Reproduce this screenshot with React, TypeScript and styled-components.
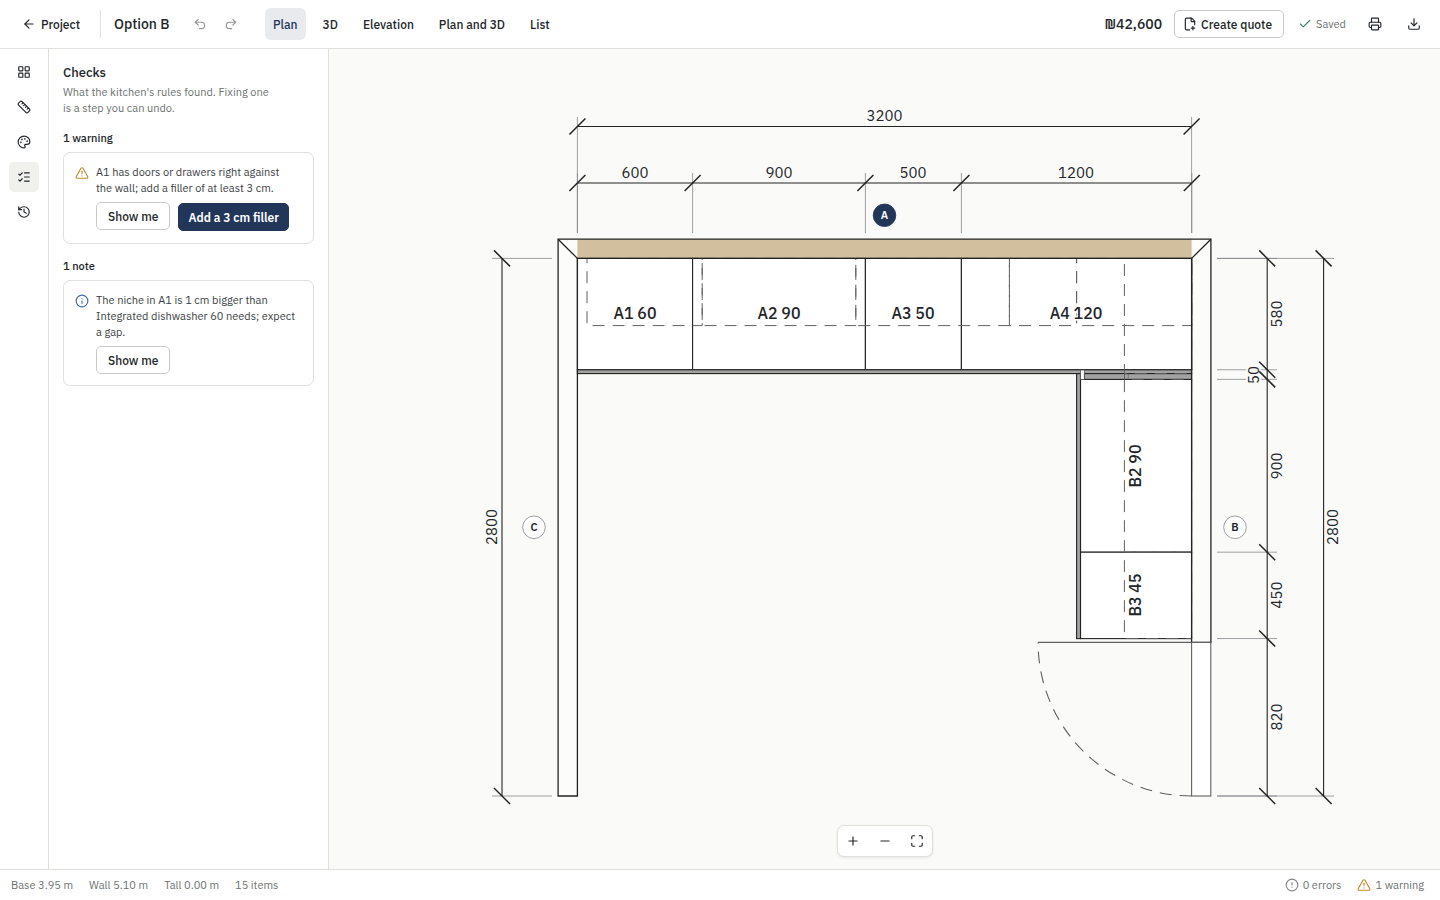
import React from "react";
import styled, { createGlobalStyle, css } from "styled-components";
import {
  ArrowLeft,
  Check,
  CircleAlert,
  Download,
  History,
  Info,
  LayoutGrid,
  ListChecks,
  Maximize,
  Minus,
  Palette,
  Plus,
  Printer,
  Redo2,
  Ruler,
  TriangleAlert,
  Undo2,
} from "lucide-react";

const c = {
  ink: "#22262a",
  muted: "#6c726f",
  line: "#dfdfdc",
  control: "#c9c9c6",
  navy: "#22365a",
  canvas: "#fafaf8",
  active: "#f0f0ed",
  tab: "#e9eaee",
  amber: "#c08a34",
  blue: "#3f6fae",
  green: "#3c8465",
  faint: "#85888b",
  stroke: "#232323",
};

const font = '"IBM Plex Sans", "Noto Sans", "Liberation Sans", sans-serif';

const GlobalStyle = createGlobalStyle`
  * { box-sizing: border-box; }
  body { margin: 0; background: #fff; color: ${c.ink}; font-family: ${font}; font-size: 12px; }
  button { font: inherit; color: inherit; cursor: pointer; }
  h1, h2, h3, p { margin: 0; }
  svg { flex: none; }
`;

const Shell = styled.div`
  display: flex;
  flex-direction: column;
  min-height: 100vh;
`;

const Header = styled.header`
  display: flex;
  align-items: center;
  justify-content: space-between;
  height: 49px;
  padding: 0 11px 0 16px;
  border-bottom: 1px solid ${c.line};
`;

const Group = styled.div<{ $gap: number }>`
  display: flex;
  align-items: center;
  gap: ${(p) => p.$gap}px;
`;

const BackLink = styled.a`
  display: flex;
  align-items: center;
  gap: 5px;
  height: 28px;
  padding: 0 20px 0 6px;
  border-right: 1px solid ${c.line};
  color: ${c.ink};
  font-size: 12px;
  font-weight: 500;
  text-decoration: none;
`;

const PlanName = styled.h1`
  width: 84px;
  padding-left: 13px;
  font-size: 14px;
  font-weight: 500;
  line-height: 20px;
  white-space: nowrap;
`;

const IconButton = styled.button<{ $active?: boolean; $dim?: boolean }>`
  display: grid;
  place-items: center;
  width: 30px;
  height: 30px;
  padding: 0;
  border: 0;
  border-radius: 5px;
  background: ${(p) => (p.$active ? c.active : "transparent")};
  color: ${(p) => (p.$dim ? "#939699" : c.ink)};
`;

const Tabs = styled.nav`
  display: flex;
  gap: 9px;
  margin-left: 19px;
`;

const Tab = styled.button<{ $active?: boolean }>`
  height: 32px;
  padding: 0 8px;
  border: 0;
  border-radius: 6px;
  background: ${(p) => (p.$active ? c.tab : "transparent")};
  color: ${(p) => (p.$active ? c.navy : c.ink)};
  font-size: 12px;
  font-weight: 500;
`;

const Price = styled.strong`
  font-size: 14px;
  font-weight: 500;
  line-height: 20px;
`;

const Button = styled.button<{ $primary?: boolean; $icon?: boolean }>`
  display: flex;
  align-items: center;
  gap: 4px;
  height: 28px;
  padding: 0 ${(p) => (p.$primary ? 9 : 11)}px 0 ${(p) => (p.$icon ? 8 : p.$primary ? 9 : 11)}px;
  border: 1px solid ${c.control};
  border-radius: 5px;
  background: #fff;
  font-size: 12px;
  font-weight: 500;
  white-space: nowrap;
  ${(p) =>
    p.$primary &&
    css`
      margin: 1px 0;
      border-color: ${c.navy};
      background: ${c.navy};
      color: #fff;
      font-weight: 600;
    `}
`;

const Status = styled.span<{ $tint: string }>`
  display: flex;
  align-items: center;
  gap: 4px;
  color: ${c.muted};
  font-size: 11px;
  svg { color: ${(p) => p.$tint}; }
`;

const Main = styled.div`
  display: flex;
  flex: 1;
`;

const Rail = styled.nav`
  display: flex;
  flex-direction: column;
  align-items: center;
  gap: 5px;
  width: 49px;
  padding-top: 8px;
  border-right: 1px solid ${c.line};
`;

const Panel = styled.aside`
  width: 280px;
  padding: 14px;
  border-right: 1px solid ${c.line};
`;

const PanelTitle = styled.h2`
  margin-bottom: 1px;
  font-size: 13px;
  font-weight: 500;
  line-height: 20px;
`;

const Intro = styled.p`
  max-width: 212px;
  color: ${c.muted};
  font-size: 11px;
  line-height: 16px;
`;

const GroupTitle = styled.h3`
  margin: 14px 0 6px;
  font-size: 11px;
  font-weight: 500;
  line-height: 16px;
`;

const Card = styled.section<{ $tint: string }>`
  display: flex;
  gap: 7px;
  padding: 11px;
  border: 1px solid ${c.line};
  border-radius: 7px;
  & > svg { margin-top: 2px; color: ${(p) => p.$tint}; }
`;

const CardText = styled.p`
  color: #3a3e43;
  font-size: 11px;
  line-height: 16px;
`;

const Actions = styled.div`
  display: flex;
  align-items: flex-start;
  gap: 8px;
  margin-top: 6px;
`;

const Canvas = styled.main`
  position: relative;
  flex: 1;
  min-width: 0;
  background: ${c.canvas};
`;

const Drawing = styled.svg`
  display: block;
  width: 100%;
  height: 100%;
  font-family: ${font};
  text { fill: ${c.ink}; text-anchor: middle; }
`;

const ZoomBar = styled.div`
  position: absolute;
  bottom: 12px;
  left: 50%;
  display: flex;
  gap: 2px;
  border: 1px solid ${c.line};
  border-radius: 7px;
  background: #fff;
  box-shadow: 0 1px 3px rgba(0, 0, 0, 0.08);
  transform: translateX(-50%);
`;

const Footer = styled.footer`
  display: flex;
  align-items: center;
  justify-content: space-between;
  height: 31px;
  padding: 0 16px 0 11px;
  border-top: 1px solid ${c.line};
  color: ${c.muted};
  font-size: 11px;
`;

function QuoteIcon() {
  return (
    <svg width="14" height="14" viewBox="0 0 24 24" fill="none" stroke="currentColor" strokeWidth="2" strokeLinecap="round" strokeLinejoin="round" aria-hidden="true">
      <path d="M11.35 22H6a2 2 0 0 1-2-2V4a2 2 0 0 1 2-2h8a2.4 2.4 0 0 1 1.7.7l3.6 3.6A2.4 2.4 0 0 1 20 8v5.35" />
      <path d="M14 2v5a1 1 0 0 0 1 1h5M14 19h6M17 16v6" />
    </svg>
  );
}

/* Room geometry: 0.192 drawing units for each millimetre. */
const L = 577.4;
const R = 1191.6;
const T = 258.4;
const B = 796;
const mm = (n: number) => n * 0.192;

function Tick({ x, y, flip }: { x: number; y: number; flip?: boolean }) {
  const d = flip ? -8 : 8;
  return <line x1={x - 8} y1={y + d} x2={x + 8} y2={y - d} stroke={c.stroke} strokeWidth="1.5" />;
}

function Measure({ x, y, turned, children }: { x: number; y: number; turned?: boolean; children: string }) {
  return (
    <text
      x={x}
      y={y}
      fontSize="15"
      stroke={c.canvas}
      strokeWidth="4"
      paintOrder="stroke"
      transform={turned ? `rotate(-90 ${x} ${y})` : undefined}
    >
      {children}
    </text>
  );
}

function UnitLabel({ x, y, turned, children }: { x: number; y: number; turned?: boolean; children: string }) {
  return (
    <text
      x={x}
      y={y}
      fontSize="16"
      fontWeight="500"
      stroke="#fff"
      strokeWidth="3"
      paintOrder="stroke"
      transform={turned ? `rotate(-90 ${x} ${y})` : undefined}
    >
      {children}
    </text>
  );
}

const BadgeLetter = styled.text<{ $active?: boolean }>`
  && { fill: ${(p) => (p.$active ? "#fff" : c.ink)}; }
  font-size: 11px;
  font-weight: 600;
`;

function WallBadge({ x, y, name, active }: { x: number; y: number; name: string; active?: boolean }) {
  return (
    <g>
      <circle cx={x} cy={y} r="11.3" fill={active ? c.navy : "#fff"} stroke={active ? c.navy : c.faint} strokeWidth="0.8" />
      <BadgeLetter x={x} y={y + 4} $active={active}>{name}</BadgeLetter>
    </g>
  );
}

const topStops = [0, 600, 1500, 2000, 3200];
const sideStops = [0, 580, 630, 1530, 1980, 2800];
const topUnits: [number, number][] = [[50, 600], [650, 800], [1450, 800], [2250, 350], [2600, 600]];
const sideUnits: [number, number][] = [[0, 600], [630, 900], [1530, 450]];

function FloorPlan() {
  return (
    <Drawing viewBox="329 49 1111 820" role="img" aria-label="Kitchen floor plan">
      {/* walls */}
      <path d={`M558.1 239.2H1210.9V642.4H${R}V${T}H${L}V${B}H558.1Z`} fill="#fcfcfb" />
      <path d={`M${L} 239.2H${R}V${T}H${L}Z`} fill="#d2bf9e" />

      {/* base units and their fronts */}
      <g fill="#fff" stroke={c.stroke} strokeWidth="1.1">
        {topStops.slice(0, 4).map((s, i) => (
          <rect key={s} x={L + mm(s)} y={T} width={mm(topStops[i + 1] - s)} height={mm(580)} />
        ))}
        <rect x={L} y="369.8" width={R - L} height="3.8" fill="#a2a2a2" />
        <rect x="1080.5" y="379.4" width="111.1" height={mm(900)} />
        <rect x="1080.5" y="552.2" width="111.1" height={mm(450)} />
        <rect x="1076.6" y="373.6" width="3.9" height="265" fill="#a2a2a2" />
        <rect x="1084.3" y="373.6" width="107.3" height="5.8" fill="#a2a2a2" />
        <rect x="1080.5" y="370" width="3.8" height="9.4" stroke="#4b4e51" strokeWidth="0.8" />
        <path d="M1128.3 373.6V379.4" stroke="#63666a" strokeWidth="0.7" />
      </g>

      {/* wall units */}
      <g fill="none" stroke="#5e6062" strokeWidth="1" strokeDasharray="12 8">
        {topUnits.map(([s, w]) => (
          <rect key={s} x={L + mm(s)} y={T} width={mm(w)} height={mm(350)} />
        ))}
        {sideUnits.map(([s, w]) => {
          const y = T + mm(s);
          return <path key={s} d={`M${R} ${y}v${mm(w)}h${-mm(350)}v${-mm(w)}Z`} />;
        })}
        <path d="M1124.5 373.6V379.4" />
      </g>

      {/* wall outlines and mitred corners */}
      <g fill="none" stroke={c.stroke} strokeWidth="1.3">
        <path d={`M558.1 239.2H1210.9V642.4H${R}V${T}H${L}V${B}H558.1Z`} />
        <path d={`M558.1 239.2L${L} ${T}M1210.9 239.2L${R} ${T}`} />
      </g>

      {/* door */}
      <g fill="none" stroke="#5e6062" strokeWidth="1.1">
        <rect x={R} y="642.4" width="19.2" height={B - 642.4} fill="#fff" />
        <path d={`M${R} 642.4H1038.1`} />
        <path d={`M${R} ${B}A153.6 153.6 0 0 1 1038.1 642.4`} strokeDasharray="12 8" />
      </g>

      {/* extension lines */}
      <g stroke={c.faint} strokeWidth="0.8">
        {topStops.map((s) => (
          <line key={s} x1={L + mm(s)} x2={L + mm(s)} y1="173" y2="233" />
        ))}
        {[L, R].map((x) => (
          <line key={x} x1={x} x2={x} y1="117" y2="233" />
        ))}
        {sideStops.map((s) => (
          <line key={s} x1="1217" x2="1277" y1={T + mm(s)} y2={T + mm(s)} />
        ))}
        {[T, B].map((y) => (
          <path key={y} d={`M1217 ${y}H1334M492 ${y}H552`} />
        ))}
      </g>

      {/* dimension lines */}
      <g stroke={c.stroke} strokeWidth="1.1">
        <line x1={L} x2={R} y1="126.5" y2="126.5" />
        <line x1={L} x2={R} y1="183" y2="183" />
        <line x1="502" x2="502" y1={T} y2={B} />
        <line x1="1267.2" x2="1267.2" y1={T} y2={B} />
        <line x1="1323.6" x2="1323.6" y1={T} y2={B} />
      </g>
      <Measure x={884.5} y={121}>3200</Measure>
      <Measure x={635} y={178}>600</Measure>
      <Measure x={779} y={178}>900</Measure>
      <Measure x={913} y={178}>500</Measure>
      <Measure x={1076} y={178}>1200</Measure>
      <Measure x={497} y={527} turned>2800</Measure>
      <Measure x={1282} y={314} turned>580</Measure>
      <Measure x={1259} y={375} turned>50</Measure>
      <Measure x={1282} y={466} turned>900</Measure>
      <Measure x={1282} y={595} turned>450</Measure>
      <Measure x={1282} y={717} turned>820</Measure>
      <Measure x={1338} y={527} turned>2800</Measure>
      {[L, R].map((x) => <Tick key={x} x={x} y={126.5} />)}
      {topStops.map((s) => <Tick key={s} x={L + mm(s)} y={183} />)}
      {sideStops.map((s) => <Tick key={s} x={1267.2} y={T + mm(s)} flip />)}
      {[T, B].map((y) => (
        <g key={y}>
          <Tick x={502} y={y} flip />
          <Tick x={1323.6} y={y} flip />
        </g>
      ))}

      <UnitLabel x={635} y={319}>A1 60</UnitLabel>
      <UnitLabel x={779} y={319}>A2 90</UnitLabel>
      <UnitLabel x={913} y={319}>A3 50</UnitLabel>
      <UnitLabel x={1076} y={319}>A4 120</UnitLabel>
      <UnitLabel x={1141} y={466} turned>B2 90</UnitLabel>
      <UnitLabel x={1141} y={595} turned>B3 45</UnitLabel>

      <WallBadge x={884.5} y={215.3} name="A" active />
      <WallBadge x={1235} y={527.3} name="B" />
      <WallBadge x={534} y={527.3} name="C" />
    </Drawing>
  );
}

export default function App() {
  return (
    <>
      <GlobalStyle />
      <Shell>
        <Header>
          <Group $gap={0}>
            <BackLink href="#project"><ArrowLeft size={14} />Project</BackLink>
            <PlanName>Option B</PlanName>
            <Group $gap={1}>
              <IconButton $dim aria-label="Undo"><Undo2 size={14} /></IconButton>
              <IconButton $dim aria-label="Redo"><Redo2 size={14} /></IconButton>
            </Group>
            <Tabs>
              <Tab $active>Plan</Tab>
              <Tab>3D</Tab>
              <Tab>Elevation</Tab>
              <Tab>Plan and 3D</Tab>
              <Tab>List</Tab>
            </Tabs>
          </Group>
          <Group $gap={14}>
            <Group $gap={12}>
              <Price>₪42,600</Price>
              <Button $icon><QuoteIcon />Create quote</Button>
            </Group>
            <Status $tint={c.green}><Check size={14} />Saved</Status>
            <Group $gap={9}>
              <IconButton aria-label="Print"><Printer size={14} /></IconButton>
              <IconButton aria-label="Download"><Download size={14} /></IconButton>
            </Group>
          </Group>
        </Header>
        <Main>
          <Rail aria-label="Tools">
            <IconButton aria-label="Units"><LayoutGrid size={14} /></IconButton>
            <IconButton aria-label="Measurements"><Ruler size={14} /></IconButton>
            <IconButton aria-label="Materials"><Palette size={14} /></IconButton>
            <IconButton $active aria-label="Checks"><ListChecks size={14} /></IconButton>
            <IconButton aria-label="History"><History size={14} /></IconButton>
          </Rail>
          <Panel>
            <PanelTitle>Checks</PanelTitle>
            <Intro>What the kitchen's rules found. Fixing one is a step you can undo.</Intro>
            <GroupTitle>1 warning</GroupTitle>
            <Card $tint={c.amber}>
              <TriangleAlert size={14} />
              <div>
                <CardText>
                  A1 has doors or drawers right against
                  <br />
                  the wall; add a filler of at least 3 cm.
                </CardText>
                <Actions>
                  <Button>Show me</Button>
                  <Button $primary>Add a 3 cm filler</Button>
                </Actions>
              </div>
            </Card>
            <GroupTitle>1 note</GroupTitle>
            <Card $tint={c.blue}>
              <Info size={14} />
              <div>
                <CardText>The niche in A1 is 1 cm bigger than Integrated dishwasher 60 needs; expect a gap.</CardText>
                <Actions>
                  <Button>Show me</Button>
                </Actions>
              </div>
            </Card>
          </Panel>
          <Canvas>
            <FloorPlan />
            <ZoomBar>
              <IconButton aria-label="Zoom in"><Plus size={14} /></IconButton>
              <IconButton aria-label="Zoom out"><Minus size={14} /></IconButton>
              <IconButton aria-label="Fit to screen"><Maximize size={14} /></IconButton>
            </ZoomBar>
          </Canvas>
        </Main>
        <Footer>
          <Group $gap={16}>
            <span>Base 3.95 m</span>
            <span>Wall 5.10 m</span>
            <span>Tall 0.00 m</span>
            <span>15 items</span>
          </Group>
          <Group $gap={16}>
            <Status $tint={c.faint}><CircleAlert size={14} />0 errors</Status>
            <Status $tint={c.amber}><TriangleAlert size={14} />1 warning</Status>
          </Group>
        </Footer>
      </Shell>
    </>
  );
}
